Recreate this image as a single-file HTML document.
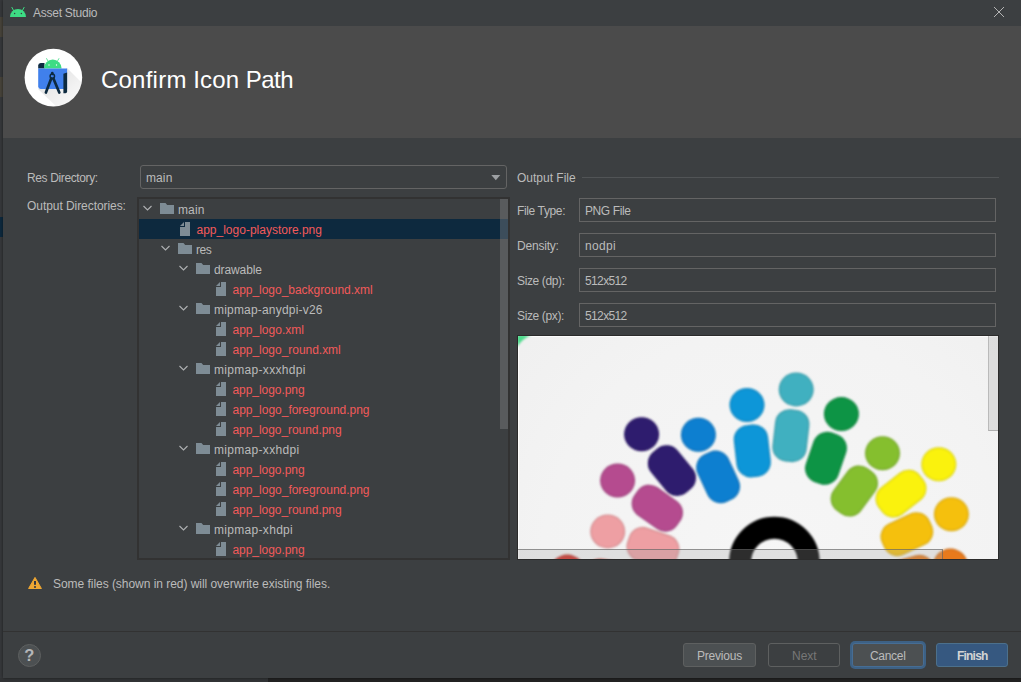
<!DOCTYPE html>
<html lang="en"><head><meta charset="utf-8"><title>Asset Studio</title>
<style>
html,body{margin:0;padding:0}
body{width:1021px;height:682px;position:relative;overflow:hidden;background:#232323;font-family:"Liberation Sans",sans-serif;font-size:12px;color:#bbb}
.a{position:absolute}
.t{position:absolute;white-space:nowrap;line-height:0;height:0}
.t::before{content:"";display:inline-block;height:0;width:0}
.fld{position:absolute;left:579px;width:415px;height:22px;border:1px solid #646464;background:#3c3f41}
.btn{position:absolute;top:643px;height:22px;border:1px solid #5e6060;border-radius:3px;background:#4c5052}
.row{position:absolute;left:139px;width:369px;height:20px}
svg{position:absolute;overflow:visible}
</style></head><body>

<div class="a" style="left:0;top:0;width:3px;height:682px;background:#36383b"></div>
<div class="a" style="left:0;top:17px;width:3px;height:20px;background:#47433a"></div>
<div class="a" style="left:0;top:77px;width:3px;height:20px;background:#47433a"></div>
<div class="a" style="left:0;top:217px;width:3px;height:20px;background:#0d293e"></div>
<div class="a" style="left:0;top:678px;width:268px;height:4px;background:#323436"></div>
<div class="a" style="left:268px;top:678px;width:753px;height:4px;background:#222222"></div>
<div class="a" style="left:3px;top:0;width:1018px;height:678px;background:#3c3f41;box-shadow:0 0 3px rgba(0,0,0,.5)"></div>
<div class="a" style="left:3px;top:26px;width:1018px;height:112px;background:#4b4b4b"></div>
<svg style="left:9px;top:5px" width="18" height="13" viewBox="0 0 18 13">
<path d="M1 12 A8 8 0 0 1 17 12 Z" fill="#3ddc84"/>
<path d="M4.6 5.6 L2.9 2.4 M13.4 5.6 L15.1 2.4" stroke="#3ddc84" stroke-width="1" stroke-linecap="round" fill="none"/>
<circle cx="5.6" cy="8.6" r=".75" fill="#3c3f41"/><circle cx="12.4" cy="8.6" r=".75" fill="#3c3f41"/>
</svg>
<div class="t" style="left:33px;top:13.14px;font-size:12px;color:#bbbbbb;letter-spacing:-0.26px;">Asset Studio</div>
<svg style="left:993px;top:6px" width="12" height="12" viewBox="0 0 12 12"><path d="M1 1 L11 11 M11 1 L1 11" stroke="#b4b4b4" stroke-width="1" fill="none"/></svg>
<svg style="left:24px;top:48px" width="60" height="60" viewBox="0 0 60 60">
<defs><clipPath id="cc"><circle cx="29.4" cy="29.6" r="28.8"/></clipPath>
<linearGradient id="sh" x1="0" y1="0" x2="1" y2="1"><stop offset="0" stop-color="#000" stop-opacity=".14"/><stop offset="1" stop-color="#000" stop-opacity="0"/></linearGradient></defs>
<circle cx="29.4" cy="29.6" r="28.8" fill="#ffffff"/>
<g clip-path="url(#cc)"><path d="M14 41 L43 20 L60 37 L60 60 L34 60 Z" fill="url(#sh)"/></g>
<path d="M14.2 17.4 Q14.2 14.9 16.6 14.9 L20.5 14.9 L20.5 20.4 L14.2 20.4 Z" fill="#0d2a40"/>
<path d="M19.9 20.4 A8.85 8.85 0 0 1 37.6 20.4 Z" fill="#3ddc84"/>
<path d="M24.3 13.6 L22.6 10.6 M33.2 13.6 L34.9 10.6" stroke="#3ddc84" stroke-width=".8" stroke-linecap="round"/>
<circle cx="25" cy="17" r=".7" fill="#fff"/><circle cx="32.5" cy="17" r=".7" fill="#fff"/>
<path d="M14.2 20.4 L43.1 20.4 L43.1 41 L16.6 41 Q14.2 41 14.2 38.6 Z" fill="#4080ec"/>
<path d="M39.4 25.7 L43.1 24.4 L43.1 43.6 Q43.1 45.2 41.5 45.2 L39.4 45.2 Z" fill="#0d2a40"/>
<path d="M28.3 25 L28.3 26 M27.2 30.6 L21.9 44.6 M29.4 30.6 L35.3 44.6" stroke="#0d2a40" stroke-width="2.7" stroke-linecap="round" fill="none"/>
<circle cx="28.3" cy="28.3" r="2.2" fill="none" stroke="#0d2a40" stroke-width="1.5"/>
</svg>
<div class="t" style="left:100.9px;top:79.98px;font-size:24px;color:#ffffff;"><span style="letter-spacing:0.25px">Confirm</span><span style="letter-spacing:0.15px;margin-left:-0.3px"> Icon</span><span style="letter-spacing:-0.45px;margin-left:0.3px"> Path</span></div>
<div class="t" style="left:27px;top:177.84px;font-size:12px;color:#bbbbbb;letter-spacing:-0.37px;">Res Directory:</div>
<div class="t" style="left:27px;top:206.14px;font-size:12px;color:#bbbbbb;letter-spacing:-0.06px;">Output Directories:</div>
<div class="a" style="left:140px;top:165px;width:365px;height:22px;border:1px solid #646464;border-radius:3px;background:#3c3f41"></div>
<div class="t" style="left:146px;top:177.84px;font-size:12px;color:#bbbbbb;letter-spacing:0.1px;">main</div>
<svg style="left:491px;top:175px" width="10" height="6" viewBox="0 0 10 6"><path d="M0.3 0 L9.3 0 L4.8 5.2 Z" fill="#9da0a3"/></svg>
<div class="a" style="left:137px;top:197px;width:369px;height:359px;border:2px solid #323232;background:#3c3f41"></div>
<div class="a" style="left:139px;top:199px;width:369px;height:359px;overflow:hidden">
<div class="a" style="left:0;top:0px;width:369px;height:20px;">
<svg style="left:4px;top:6px" width="9" height="7" viewBox="0 0 9 7"><path d="M0.5 1 L4.5 5 L8.5 1" stroke="#afb1b3" stroke-width="1.1" fill="none"/></svg>
<svg style="left:21px;top:4px" width="14" height="11" viewBox="0 0 14 11"><path d="M0 0 L5.5 0 L7.2 2 L14 2 L14 11 L0 11 Z" fill="#7e8c95"/></svg>
<div class="t" style="left:39px;top:10.64px;font-size:12px;color:#bbbbbb;letter-spacing:0.12px;">main</div>
</div>
<div class="a" style="left:0;top:20px;width:369px;height:20px;background:#0d293e;">
<svg style="left:41px;top:3px" width="10" height="14" viewBox="0 0 10 14"><path d="M5 0 H10 V14 H0 V5 H5 Z" fill="#7e8c95"/><path d="M4 0 V4 H0 Z" fill="#7e8c95"/></svg>
<div class="t" style="left:57.5px;top:10.64px;font-size:12px;color:#f25a5a;">app_logo-playstore.png</div>
</div>
<div class="a" style="left:0;top:40px;width:369px;height:20px;">
<svg style="left:22px;top:6px" width="9" height="7" viewBox="0 0 9 7"><path d="M0.5 1 L4.5 5 L8.5 1" stroke="#afb1b3" stroke-width="1.1" fill="none"/></svg>
<svg style="left:39px;top:4px" width="14" height="11" viewBox="0 0 14 11"><path d="M0 0 L5.5 0 L7.2 2 L14 2 L14 11 L0 11 Z" fill="#7e8c95"/></svg>
<div class="t" style="left:57px;top:10.64px;font-size:12px;color:#bbbbbb;letter-spacing:-0.5px;">res</div>
</div>
<div class="a" style="left:0;top:60px;width:369px;height:20px;">
<svg style="left:40px;top:6px" width="9" height="7" viewBox="0 0 9 7"><path d="M0.5 1 L4.5 5 L8.5 1" stroke="#afb1b3" stroke-width="1.1" fill="none"/></svg>
<svg style="left:57px;top:4px" width="14" height="11" viewBox="0 0 14 11"><path d="M0 0 L5.5 0 L7.2 2 L14 2 L14 11 L0 11 Z" fill="#7e8c95"/></svg>
<div class="t" style="left:75px;top:10.64px;font-size:12px;color:#bbbbbb;letter-spacing:-0.1px;">drawable</div>
</div>
<div class="a" style="left:0;top:80px;width:369px;height:20px;">
<svg style="left:77px;top:3px" width="10" height="14" viewBox="0 0 10 14"><path d="M5 0 H10 V14 H0 V5 H5 Z" fill="#7e8c95"/><path d="M4 0 V4 H0 Z" fill="#7e8c95"/></svg>
<div class="t" style="left:93.5px;top:10.64px;font-size:12px;color:#f25a5a;letter-spacing:-0.03px;">app_logo_background.xml</div>
</div>
<div class="a" style="left:0;top:100px;width:369px;height:20px;">
<svg style="left:40px;top:6px" width="9" height="7" viewBox="0 0 9 7"><path d="M0.5 1 L4.5 5 L8.5 1" stroke="#afb1b3" stroke-width="1.1" fill="none"/></svg>
<svg style="left:57px;top:4px" width="14" height="11" viewBox="0 0 14 11"><path d="M0 0 L5.5 0 L7.2 2 L14 2 L14 11 L0 11 Z" fill="#7e8c95"/></svg>
<div class="t" style="left:75px;top:10.64px;font-size:12px;color:#bbbbbb;letter-spacing:0.19px;">mipmap-anydpi-v26</div>
</div>
<div class="a" style="left:0;top:120px;width:369px;height:20px;">
<svg style="left:77px;top:3px" width="10" height="14" viewBox="0 0 10 14"><path d="M5 0 H10 V14 H0 V5 H5 Z" fill="#7e8c95"/><path d="M4 0 V4 H0 Z" fill="#7e8c95"/></svg>
<div class="t" style="left:93.5px;top:10.64px;font-size:12px;color:#f25a5a;">app_logo.xml</div>
</div>
<div class="a" style="left:0;top:140px;width:369px;height:20px;">
<svg style="left:77px;top:3px" width="10" height="14" viewBox="0 0 10 14"><path d="M5 0 H10 V14 H0 V5 H5 Z" fill="#7e8c95"/><path d="M4 0 V4 H0 Z" fill="#7e8c95"/></svg>
<div class="t" style="left:93.5px;top:10.64px;font-size:12px;color:#f25a5a;letter-spacing:-0.03px;">app_logo_round.xml</div>
</div>
<div class="a" style="left:0;top:160px;width:369px;height:20px;">
<svg style="left:40px;top:6px" width="9" height="7" viewBox="0 0 9 7"><path d="M0.5 1 L4.5 5 L8.5 1" stroke="#afb1b3" stroke-width="1.1" fill="none"/></svg>
<svg style="left:57px;top:4px" width="14" height="11" viewBox="0 0 14 11"><path d="M0 0 L5.5 0 L7.2 2 L14 2 L14 11 L0 11 Z" fill="#7e8c95"/></svg>
<div class="t" style="left:75px;top:10.64px;font-size:12px;color:#bbbbbb;letter-spacing:0.31px;">mipmap-xxxhdpi</div>
</div>
<div class="a" style="left:0;top:180px;width:369px;height:20px;">
<svg style="left:77px;top:3px" width="10" height="14" viewBox="0 0 10 14"><path d="M5 0 H10 V14 H0 V5 H5 Z" fill="#7e8c95"/><path d="M4 0 V4 H0 Z" fill="#7e8c95"/></svg>
<div class="t" style="left:93.5px;top:10.64px;font-size:12px;color:#f25a5a;letter-spacing:-0.06px;">app_logo.png</div>
</div>
<div class="a" style="left:0;top:200px;width:369px;height:20px;">
<svg style="left:77px;top:3px" width="10" height="14" viewBox="0 0 10 14"><path d="M5 0 H10 V14 H0 V5 H5 Z" fill="#7e8c95"/><path d="M4 0 V4 H0 Z" fill="#7e8c95"/></svg>
<div class="t" style="left:93.5px;top:10.64px;font-size:12px;color:#f25a5a;letter-spacing:-0.02px;">app_logo_foreground.png</div>
</div>
<div class="a" style="left:0;top:220px;width:369px;height:20px;">
<svg style="left:77px;top:3px" width="10" height="14" viewBox="0 0 10 14"><path d="M5 0 H10 V14 H0 V5 H5 Z" fill="#7e8c95"/><path d="M4 0 V4 H0 Z" fill="#7e8c95"/></svg>
<div class="t" style="left:93.5px;top:10.64px;font-size:12px;color:#f25a5a;letter-spacing:-0.06px;">app_logo_round.png</div>
</div>
<div class="a" style="left:0;top:240px;width:369px;height:20px;">
<svg style="left:40px;top:6px" width="9" height="7" viewBox="0 0 9 7"><path d="M0.5 1 L4.5 5 L8.5 1" stroke="#afb1b3" stroke-width="1.1" fill="none"/></svg>
<svg style="left:57px;top:4px" width="14" height="11" viewBox="0 0 14 11"><path d="M0 0 L5.5 0 L7.2 2 L14 2 L14 11 L0 11 Z" fill="#7e8c95"/></svg>
<div class="t" style="left:75px;top:10.64px;font-size:12px;color:#bbbbbb;letter-spacing:0.31px;">mipmap-xxhdpi</div>
</div>
<div class="a" style="left:0;top:260px;width:369px;height:20px;">
<svg style="left:77px;top:3px" width="10" height="14" viewBox="0 0 10 14"><path d="M5 0 H10 V14 H0 V5 H5 Z" fill="#7e8c95"/><path d="M4 0 V4 H0 Z" fill="#7e8c95"/></svg>
<div class="t" style="left:93.5px;top:10.64px;font-size:12px;color:#f25a5a;letter-spacing:-0.06px;">app_logo.png</div>
</div>
<div class="a" style="left:0;top:280px;width:369px;height:20px;">
<svg style="left:77px;top:3px" width="10" height="14" viewBox="0 0 10 14"><path d="M5 0 H10 V14 H0 V5 H5 Z" fill="#7e8c95"/><path d="M4 0 V4 H0 Z" fill="#7e8c95"/></svg>
<div class="t" style="left:93.5px;top:10.64px;font-size:12px;color:#f25a5a;letter-spacing:-0.02px;">app_logo_foreground.png</div>
</div>
<div class="a" style="left:0;top:300px;width:369px;height:20px;">
<svg style="left:77px;top:3px" width="10" height="14" viewBox="0 0 10 14"><path d="M5 0 H10 V14 H0 V5 H5 Z" fill="#7e8c95"/><path d="M4 0 V4 H0 Z" fill="#7e8c95"/></svg>
<div class="t" style="left:93.5px;top:10.64px;font-size:12px;color:#f25a5a;letter-spacing:-0.06px;">app_logo_round.png</div>
</div>
<div class="a" style="left:0;top:320px;width:369px;height:20px;">
<svg style="left:40px;top:6px" width="9" height="7" viewBox="0 0 9 7"><path d="M0.5 1 L4.5 5 L8.5 1" stroke="#afb1b3" stroke-width="1.1" fill="none"/></svg>
<svg style="left:57px;top:4px" width="14" height="11" viewBox="0 0 14 11"><path d="M0 0 L5.5 0 L7.2 2 L14 2 L14 11 L0 11 Z" fill="#7e8c95"/></svg>
<div class="t" style="left:75px;top:10.64px;font-size:12px;color:#bbbbbb;letter-spacing:0.31px;">mipmap-xhdpi</div>
</div>
<div class="a" style="left:0;top:340px;width:369px;height:20px;">
<svg style="left:77px;top:3px" width="10" height="14" viewBox="0 0 10 14"><path d="M5 0 H10 V14 H0 V5 H5 Z" fill="#7e8c95"/><path d="M4 0 V4 H0 Z" fill="#7e8c95"/></svg>
<div class="t" style="left:93.5px;top:10.64px;font-size:12px;color:#f25a5a;letter-spacing:-0.06px;">app_logo.png</div>
</div>
</div>
<div class="a" style="left:500px;top:199px;width:8px;height:230px;background:rgba(140,140,140,.37)"></div>
<div class="t" style="left:517px;top:178.14px;font-size:12px;color:#bbbbbb;">Output File</div>
<div class="a" style="left:582px;top:177px;width:417px;height:1px;background:#515456"></div>
<div class="t" style="left:517px;top:210.84px;font-size:12px;color:#bbbbbb;letter-spacing:-0.37px;">File Type:</div>
<div class="fld" style="top:198px"></div>
<div class="t" style="left:585px;top:210.84px;font-size:12px;color:#bbbbbb;letter-spacing:-0.4px;">PNG File</div>
<div class="t" style="left:517px;top:245.84px;font-size:12px;color:#bbbbbb;letter-spacing:-0.2px;">Density:</div>
<div class="fld" style="top:233px"></div>
<div class="t" style="left:585px;top:245.84px;font-size:12px;color:#bbbbbb;letter-spacing:0.3px;">nodpi</div>
<div class="t" style="left:517px;top:280.84px;font-size:12px;color:#bbbbbb;letter-spacing:-0.37px;">Size (dp):</div>
<div class="fld" style="top:268px"></div>
<div class="t" style="left:585px;top:280.84px;font-size:12px;color:#bbbbbb;letter-spacing:-0.63px;">512x512</div>
<div class="t" style="left:517px;top:315.84px;font-size:12px;color:#bbbbbb;letter-spacing:-0.37px;">Size (px):</div>
<div class="fld" style="top:303px"></div>
<div class="t" style="left:585px;top:315.84px;font-size:12px;color:#bbbbbb;letter-spacing:-0.63px;">512x512</div>
<div class="a" style="left:517px;top:335px;width:482px;height:225px;background:#2b2b2b"></div>
<div class="a" style="left:518px;top:336px;width:480px;height:223px;background:#f2f2f2;overflow:hidden">
<svg style="left:0;top:0" width="480" height="223" viewBox="518 336 480 223"><defs><radialGradient id="bg" cx="774" cy="560" r="330" gradientUnits="userSpaceOnUse"><stop offset="0" stop-color="#f6f6f6"/><stop offset=".7" stop-color="#f3f3f3"/><stop offset="1" stop-color="#f0f0f0"/></radialGradient><filter id="bl"><feGaussianBlur stdDeviation="0.9"/></filter></defs><rect x="518" y="336" width="480" height="223" fill="url(#bg)"/><path d="M518 336.5 L998 336.5 M518.5 336 L518.5 559" stroke="#ffffff" stroke-width="1" fill="none" opacity=".8"/><path d="M517 335 L531 335 Q522 339 517 347 Z" fill="#4ddc8c" filter="url(#bl)"/><g filter="url(#bl)"><ellipse cx="567.3" cy="571.6" rx="17.5" ry="17" fill="#bb251c"/><rect x="593.75" y="551.75" width="34.5" height="52.5" rx="14.5" fill="#bb251c" transform="rotate(-80 611 578)"/><ellipse cx="607.7" cy="531.4" rx="17.5" ry="17" fill="#d68f92"/><rect x="635.75" y="521.55" width="34.5" height="52.5" rx="14.5" fill="#d68f92" transform="rotate(-71 653 547.8)"/><ellipse cx="617.6" cy="480.5" rx="17.5" ry="17" fill="#a24480"/><rect x="640.05" y="481.95" width="34.5" height="52.5" rx="14.5" fill="#a24480" transform="rotate(-54.7 657.3 508.2)"/><ellipse cx="641.6" cy="434.2" rx="17.5" ry="17" fill="#281763"/><rect x="654.65" y="444.35" width="34.5" height="52.5" rx="14.5" fill="#281763" transform="rotate(-39.5 671.9 470.6)"/><ellipse cx="698.4" cy="434.7" rx="17.5" ry="17" fill="#0972bb"/><rect x="700.85" y="450.65" width="34.5" height="52.5" rx="14.5" fill="#0972bb" transform="rotate(-24.8 718.1 476.9)"/><ellipse cx="747.0" cy="405.0" rx="17.5" ry="17" fill="#0b87c2"/><rect x="735.05" y="424.65" width="34.5" height="52.5" rx="14.5" fill="#0b87c2" transform="rotate(-6.5 752.3 450.9)"/><ellipse cx="796.2" cy="389.4" rx="17.5" ry="17" fill="#3a9eac"/><rect x="773.65" y="409.45" width="34.5" height="52.5" rx="14.5" fill="#3a9eac" transform="rotate(6.5 790.9 435.7)"/><ellipse cx="841.4" cy="414.1" rx="17.5" ry="17" fill="#09853d"/><rect x="808.75" y="432.05" width="34.5" height="52.5" rx="14.5" fill="#09853d" transform="rotate(19 826.0 458.3)"/><ellipse cx="882.5" cy="453.2" rx="17.5" ry="17" fill="#77ab29"/><rect x="837.05" y="464.75" width="34.5" height="52.5" rx="14.5" fill="#77ab29" transform="rotate(36.4 854.3 491)"/><ellipse cx="938.8" cy="464.3" rx="17.5" ry="17" fill="#e1d90c"/><rect x="883.75" y="467.35" width="34.5" height="52.5" rx="14.5" fill="#e1d90c" transform="rotate(51.8 901 493.6)"/><ellipse cx="951.4" cy="514.2" rx="17.5" ry="17" fill="#dcac0e"/><rect x="889.65" y="507.95" width="34.5" height="52.5" rx="14.5" fill="#dcac0e" transform="rotate(65 906.9 534.2)"/><ellipse cx="950.4" cy="565.6" rx="17.5" ry="17" fill="#d06d17"/><rect x="891.75" y="548.75" width="34.5" height="52.5" rx="14.5" fill="#d06d17" transform="rotate(75 909 575)"/><ellipse cx="567.3" cy="571.6" rx="16.1" ry="15.6" fill="#d02a20"/><rect x="595.15" y="553.15" width="31.7" height="49.7" rx="13.1" fill="#d02a20" transform="rotate(-80 611 578)"/><ellipse cx="607.7" cy="531.4" rx="16.1" ry="15.6" fill="#ee9fa3"/><rect x="637.15" y="522.95" width="31.7" height="49.7" rx="13.1" fill="#ee9fa3" transform="rotate(-71 653 547.8)"/><ellipse cx="617.6" cy="480.5" rx="16.1" ry="15.6" fill="#b54c8f"/><rect x="641.45" y="483.35" width="31.7" height="49.7" rx="13.1" fill="#b54c8f" transform="rotate(-54.7 657.3 508.2)"/><ellipse cx="641.6" cy="434.2" rx="16.1" ry="15.6" fill="#2d1a6e"/><rect x="656.05" y="445.75" width="31.7" height="49.7" rx="13.1" fill="#2d1a6e" transform="rotate(-39.5 671.9 470.6)"/><ellipse cx="698.4" cy="434.7" rx="16.1" ry="15.6" fill="#0a7fd0"/><rect x="702.25" y="452.05" width="31.7" height="49.7" rx="13.1" fill="#0a7fd0" transform="rotate(-24.8 718.1 476.9)"/><ellipse cx="747.0" cy="405.0" rx="16.1" ry="15.6" fill="#0d96d8"/><rect x="736.45" y="426.05" width="31.7" height="49.7" rx="13.1" fill="#0d96d8" transform="rotate(-6.5 752.3 450.9)"/><ellipse cx="796.2" cy="389.4" rx="16.1" ry="15.6" fill="#41b0c0"/><rect x="775.05" y="410.85" width="31.7" height="49.7" rx="13.1" fill="#41b0c0" transform="rotate(6.5 790.9 435.7)"/><ellipse cx="841.4" cy="414.1" rx="16.1" ry="15.6" fill="#0a9444"/><rect x="810.15" y="433.45" width="31.7" height="49.7" rx="13.1" fill="#0a9444" transform="rotate(19 826.0 458.3)"/><ellipse cx="882.5" cy="453.2" rx="16.1" ry="15.6" fill="#85bf2e"/><rect x="838.45" y="466.15" width="31.7" height="49.7" rx="13.1" fill="#85bf2e" transform="rotate(36.4 854.3 491)"/><ellipse cx="938.8" cy="464.3" rx="16.1" ry="15.6" fill="#faf20e"/><rect x="885.15" y="468.75" width="31.7" height="49.7" rx="13.1" fill="#faf20e" transform="rotate(51.8 901 493.6)"/><ellipse cx="951.4" cy="514.2" rx="16.1" ry="15.6" fill="#f5c010"/><rect x="891.05" y="509.35" width="31.7" height="49.7" rx="13.1" fill="#f5c010" transform="rotate(65 906.9 534.2)"/><ellipse cx="950.4" cy="565.6" rx="16.1" ry="15.6" fill="#e87a1a"/><rect x="893.15" y="550.15" width="31.7" height="49.7" rx="13.1" fill="#e87a1a" transform="rotate(75 909 575)"/><circle cx="774.4" cy="562" r="34.3" fill="none" stroke="#000" stroke-width="22"/></g></svg>
<div class="a" style="left:470px;top:0;width:10px;height:95px;background:rgba(165,165,165,.27);border-left:1px solid rgba(120,120,120,.35);border-bottom:1px solid rgba(120,120,120,.45);box-sizing:border-box"></div>
<div class="a" style="left:0;top:213px;width:425px;height:10px;background:rgba(165,165,165,.27);border-top:1px solid rgba(90,90,90,.6);border-right:1px solid rgba(90,90,90,.6);box-sizing:border-box"></div>
</div>
<svg style="left:27px;top:576px" width="16" height="14" viewBox="0 0 16 14"><path d="M8 1.4 L14.4 12.5 L1.6 12.5 Z" fill="#f0a732" stroke="#f0a732" stroke-width="1" stroke-linejoin="round"/><rect x="7.1" y="5" width="1.8" height="3.8" fill="#222c40"/><rect x="7.1" y="10.2" width="1.8" height="1.6" fill="#222c40"/></svg>
<div class="t" style="left:53px;top:583.84px;font-size:12px;color:#bbbbbb;letter-spacing:-0.04px;">Some files (shown in red) will overwrite existing files.</div>
<div class="a" style="left:3px;top:631px;width:1018px;height:1px;background:#323232"></div>
<div class="a" style="left:18px;top:644px;width:21px;height:21px;border:1px solid #5e6060;border-radius:50%;background:#4c5052"></div>
<div class="t" style="left:24.2px;top:655.48px;font-size:16.5px;color:#b4b6b8;font-weight:700;">?</div>
<div class="btn" style="left:683px;width:71px"></div>
<div class="t" style="left:697px;top:656.14px;font-size:12px;color:#bbbbbb;letter-spacing:-0.21px;">Previous</div>
<div class="btn" style="left:768px;width:70px;background:#3c3f41"></div>
<div class="t" style="left:792px;top:656.14px;font-size:12px;color:#777777;">Next</div>
<div class="btn" style="left:852px;width:70px;box-shadow:0 0 0 2px #3d6185;border-color:#466d94"></div>
<div class="t" style="left:870px;top:656.14px;font-size:12px;color:#bbbbbb;letter-spacing:-0.31px;">Cancel</div>
<div class="btn" style="left:936px;width:70px;background:#365880;border-color:#4c708c"></div>
<div class="t" style="left:957px;top:656.14px;font-size:12px;color:#d4d4d4;letter-spacing:-0.8px;font-weight:700;">Finish</div>
</body></html>
